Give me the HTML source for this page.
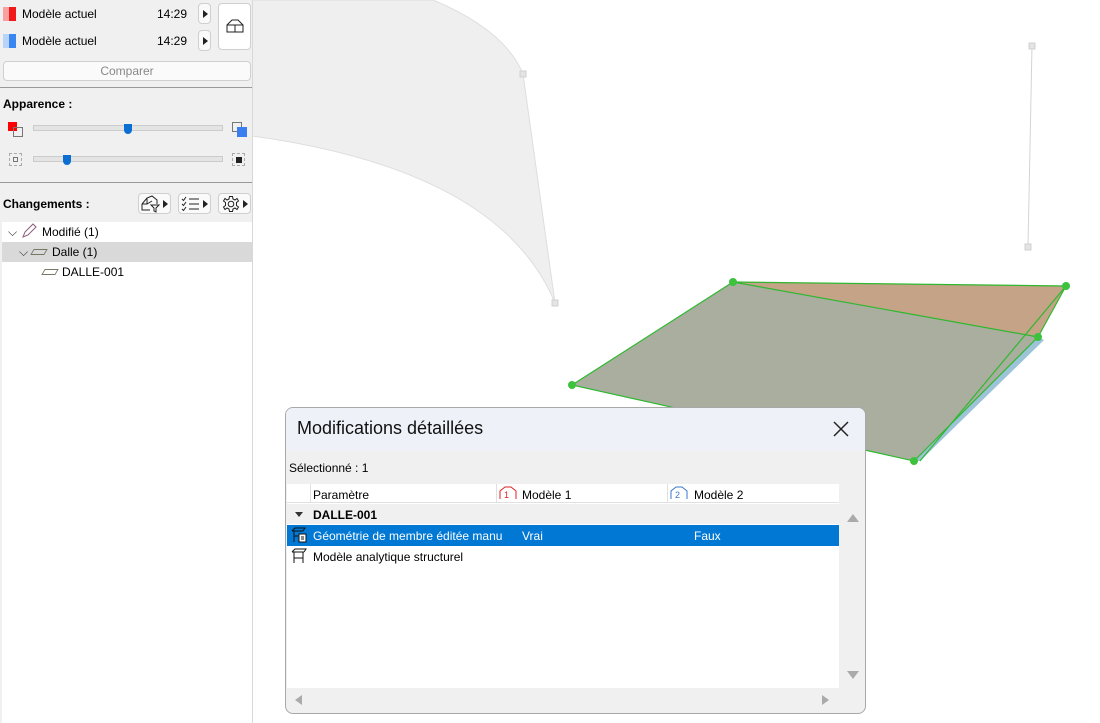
<!DOCTYPE html>
<html><head><meta charset="utf-8"><style>
*{box-sizing:border-box;margin:0;padding:0}
body{width:1100px;height:723px;position:relative;overflow:hidden;background:#fff;font-family:"Liberation Sans",sans-serif;font-size:12px;color:#000}
.abs{position:absolute}
.lp{left:0;top:0;width:253px;height:723px;background:#f0f0f0;border-right:1px solid #d8d8d8}
.btn{background:#fafafa;border:1px solid #cfcfcf;border-radius:4px}
.tri{width:0;height:0;border-top:4px solid transparent;border-bottom:4px solid transparent;border-left:5px solid #222}
</style></head><body>
<svg class="abs" style="left:0;top:0" width="1100" height="723">
<path d="M252 0 L433 0 Q505 30 523 74 L555 303 Q500 170 252 136 Z" fill="#efefef" stroke="#dedede" stroke-width="1"/>
<rect x="520" y="71" width="6" height="6" fill="#e4e4e4" stroke="#d0d0d0"/>
<rect x="552" y="300" width="6" height="6" fill="#e4e4e4" stroke="#d0d0d0"/>
<line x1="1032" y1="46" x2="1028" y2="247" stroke="#d4d4d4"/>
<rect x="1029" y="43" width="6" height="6" fill="#e4e4e4" stroke="#d0d0d0"/>
<rect x="1025" y="244" width="6" height="6" fill="#e4e4e4" stroke="#d0d0d0"/>
<polygon points="733,282 1066,286 1038,337" fill="#c4a386"/>
<polygon points="1038,337 1044,340 920,461 914,461" fill="#9cc3d8"/>
<polygon points="733,282 1038,337 914,461 572,385" fill="#a9ae9f"/>
<polyline points="733,282 1066,286 1038,337 914,461 572,385 733,282 1038,337" fill="none" stroke="#2fb82f" stroke-width="1.2"/>
<line x1="1066" y1="286" x2="920" y2="461" stroke="#2fb82f" stroke-width="1.2"/>
<g fill="#3cc23c"><circle cx="733" cy="282" r="4"/><circle cx="1066" cy="286" r="4"/><circle cx="1038" cy="337" r="4"/><circle cx="914" cy="461" r="4"/><circle cx="572" cy="385" r="4"/></g>
</svg>
<div class="abs lp">
 <div class="abs" style="left:3px;top:7px;width:6px;height:14px;background:#f9a0a0"></div><div class="abs" style="left:9px;top:7px;width:7px;height:14px;background:#f01818"></div>
 <div class="abs" style="left:22px;top:7px">Modèle actuel</div><div class="abs" style="left:157px;top:7px">14:29</div>
 <div class="abs btn" style="left:198px;top:3px;width:13px;height:21px"><div class="tri abs" style="left:4px;top:6px"></div></div>
 <div class="abs" style="left:3px;top:34px;width:6px;height:14px;background:#b8d4fa"></div><div class="abs" style="left:9px;top:34px;width:7px;height:14px;background:#3a86f0"></div>
 <div class="abs" style="left:22px;top:34px">Modèle actuel</div><div class="abs" style="left:157px;top:34px">14:29</div>
 <div class="abs btn" style="left:198px;top:30px;width:13px;height:21px"><div class="tri abs" style="left:4px;top:6px"></div></div>
 <div class="abs btn" style="left:218px;top:3px;width:33px;height:47px;background:#fff"><svg class="abs" style="left:7px;top:15px" width="18" height="14"><path d="M1 13 V6 L6 1 H12 L17 6 V13 Z M1 6 H17" fill="none" stroke="#222"/><path d="M9 6 V13" stroke="#222"/></svg></div>
 <div class="abs btn" style="left:3px;top:61px;width:248px;height:20px;color:#888;text-align:center;line-height:18px">Comparer</div>
 <div class="abs" style="left:0;top:87px;width:252px;height:1px;background:#999"></div>
 <div class="abs" style="left:3px;top:97px;font-weight:bold">Apparence :</div>
 <div class="abs" style="left:8px;top:122px;width:9px;height:9px;background:#f00"></div><div class="abs" style="left:13px;top:127px;width:10px;height:10px;border:1px solid #777"></div>
 <div class="abs" style="left:33px;top:125px;width:190px;height:6px;background:#e4e4e4;border:1px solid #ccc"></div>
 <div class="abs" style="left:124px;top:124px;width:8px;height:10px;background:#0a6fd0;border-radius:0 0 4px 4px"></div>
 <div class="abs" style="left:232px;top:122px;width:10px;height:10px;border:1px solid #777"></div><div class="abs" style="left:237px;top:127px;width:10px;height:10px;background:#3a7ef0"></div>
 <div class="abs" style="left:9px;top:153px;width:13px;height:13px;border:1px dashed #aaa"></div><div class="abs" style="left:13px;top:157px;width:5px;height:5px;border:1px solid #777"></div>
 <div class="abs" style="left:33px;top:156px;width:190px;height:6px;background:#e4e4e4;border:1px solid #ccc"></div>
 <div class="abs" style="left:63px;top:155px;width:8px;height:10px;background:#0a6fd0;border-radius:0 0 4px 4px"></div>
 <div class="abs" style="left:232px;top:153px;width:13px;height:13px;border:1px dashed #aaa"></div><div class="abs" style="left:236px;top:157px;width:6px;height:6px;background:#222"></div>
 <div class="abs" style="left:0;top:182px;width:252px;height:1px;background:#999"></div>
 <div class="abs" style="left:3px;top:197px;font-weight:bold">Changements :</div>
 <div class="abs btn" style="left:138px;top:193px;width:33px;height:21px"><svg class="abs" style="left:2px;top:1px" width="20" height="18"><path d="M1 9 L6 3 L11 1 L16 5 V9 M1 9 V15 H9 M6 3 V9 H1 M6 9 L11 6" fill="none" stroke="#222"/><path d="M10 10 H18 L15 13 V17 L13 16 V13 Z" fill="#fff" stroke="#222"/></svg><div class="tri abs" style="left:24px;top:6px"></div></div>
 <div class="abs btn" style="left:178px;top:193px;width:33px;height:21px"><svg class="abs" style="left:2px;top:2px" width="20" height="16"><path d="M1 3 L2.5 4.5 L5 1 M1 8 L2.5 9.5 L5 6 M1 13 L2.5 14.5 L5 11 M8 3 H18 M8 8 H18 M8 13 H18" fill="none" stroke="#222"/></svg><div class="tri abs" style="left:24px;top:6px"></div></div>
 <div class="abs btn" style="left:218px;top:193px;width:33px;height:21px"><svg class="abs" style="left:3px;top:1px" width="18" height="18"><circle cx="9" cy="9" r="2.8" fill="none" stroke="#222"/><path d="M7.5 1.5 H10.5 L11 4 L13 5 L15 3.5 L16.5 6 L14.5 7.5 V10.5 L16.5 12 L15 14.5 L13 13 L11 14 L10.5 16.5 H7.5 L7 14 L5 13 L3 14.5 L1.5 12 L3.5 10.5 V7.5 L1.5 6 L3 3.5 L5 5 L7 4 Z" fill="none" stroke="#222"/></svg><div class="tri abs" style="left:24px;top:6px"></div></div>
 <div class="abs" style="left:2px;top:222px;width:250px;height:501px;background:#fff"></div>
 <div class="abs" style="left:2px;top:242px;width:250px;height:20px;background:#d9d9d9"></div>
 <div class="abs" style="left:8px;top:225px;color:#333">⌵</div>
 <svg class="abs" style="left:21px;top:223px" width="16" height="16"><path d="M2 14 L4 9 L12 1 L15 4 L7 12 Z" fill="none" stroke="#8a5a7a"/></svg>
 <div class="abs" style="left:42px;top:225px">Modifié (1)</div>
 <div class="abs" style="left:19px;top:245px;color:#333">⌵</div>
 <div class="abs" style="left:32px;top:249px;width:14px;height:6px;border:1.5px solid #776;transform:skewX(-30deg)"></div>
 <div class="abs" style="left:52px;top:245px">Dalle (1)</div>
 <div class="abs" style="left:43px;top:269px;width:14px;height:6px;border:1.5px solid #776;transform:skewX(-30deg)"></div>
 <div class="abs" style="left:62px;top:265px">DALLE-001</div>
</div>
<div class="abs" style="left:285px;top:407px;width:581px;height:307px;border:1px solid #a8a8a8;border-radius:8px;background:#f0f0f0;overflow:hidden">
 <div class="abs" style="left:0;top:0;width:581px;height:43px;background:#eef2f8"></div>
 <div class="abs" style="left:11px;top:10px;font-size:18px;color:#111">Modifications détaillées</div>
 <svg class="abs" style="left:546px;top:12px" width="18" height="18"><path d="M2 2 L16 16 M16 2 L2 16" stroke="#222" stroke-width="1.5"/></svg>
 <div class="abs" style="left:3px;top:53px">Sélectionné : 1</div>
 <div class="abs" style="left:1px;top:76px;width:552px;height:204px;background:#fff"></div>
 <div class="abs" style="left:1px;top:76px;width:552px;height:19px;border-bottom:1px solid #e0e0e0"></div>
 <div class="abs" style="left:24px;top:76px;width:1px;height:19px;background:#e0e0e0"></div>
 <div class="abs" style="left:210px;top:76px;width:1px;height:19px;background:#e0e0e0"></div>
 <div class="abs" style="left:381px;top:76px;width:1px;height:19px;background:#e0e0e0"></div>
 <div class="abs" style="left:27px;top:80px">Paramètre</div>
 <svg class="abs" style="left:213px;top:78px" width="18" height="14"><path d="M1 13 V5 L6 1 H12 L17 5 V13" fill="none" stroke="#d22"/><text x="5" y="12" font-size="9" fill="#d22" font-family="Liberation Sans">1</text></svg>
 <div class="abs" style="left:236px;top:80px">Modèle 1</div>
 <svg class="abs" style="left:384px;top:78px" width="18" height="14"><path d="M1 13 V5 L6 1 H12 L17 5 V13" fill="none" stroke="#3a78d0"/><text x="5" y="12" font-size="9" fill="#3a78d0" font-family="Liberation Sans">2</text></svg>
 <div class="abs" style="left:408px;top:80px">Modèle 2</div>
 <div class="abs" style="left:1px;top:96px;width:552px;height:20px;background:#f0f0f0"></div>
 <div class="abs" style="left:9px;top:104px;border-left:4px solid transparent;border-right:4px solid transparent;border-top:5px solid #333"></div>
 <div class="abs" style="left:27px;top:100px;font-weight:bold">DALLE-001</div>
 <div class="abs" style="left:1px;top:117px;width:552px;height:21px;background:#0078d4"></div>
 <svg class="abs" style="left:5px;top:119px" width="16" height="16"><path d="M1 4 H12 M3 4 V15 M1 4 L4 1 H14 L12 4 M3 9 H7" fill="none" stroke="#111"/><rect x="8" y="7" width="7" height="8" fill="#fff" stroke="#111"/><path d="M10 10 H13 M10 12 H13" stroke="#111"/></svg>
 <div class="abs" style="left:27px;top:121px;color:#fff">Géométrie de membre éditée manu</div>
 <div class="abs" style="left:236px;top:121px;color:#fff">Vrai</div>
 <div class="abs" style="left:408px;top:121px;color:#fff">Faux</div>
 <svg class="abs" style="left:5px;top:140px" width="16" height="16"><path d="M1 4 H13 M3 4 V15 M12 4 V15 M3 10 H12 M1 4 L4 1 H15 L13 4" fill="none" stroke="#111"/></svg>
 <div class="abs" style="left:27px;top:142px">Modèle analytique structurel</div>
 <div class="abs" style="left:561px;top:106px;border-left:6px solid transparent;border-right:6px solid transparent;border-bottom:8px solid #aaa"></div>
 <div class="abs" style="left:561px;top:263px;border-left:6px solid transparent;border-right:6px solid transparent;border-top:8px solid #aaa"></div>
 <div class="abs" style="left:9px;top:287px;border-top:5px solid transparent;border-bottom:5px solid transparent;border-right:7px solid #aaa"></div>
 <div class="abs" style="left:536px;top:287px;border-top:5px solid transparent;border-bottom:5px solid transparent;border-left:7px solid #aaa"></div>
</div>
</body></html>
